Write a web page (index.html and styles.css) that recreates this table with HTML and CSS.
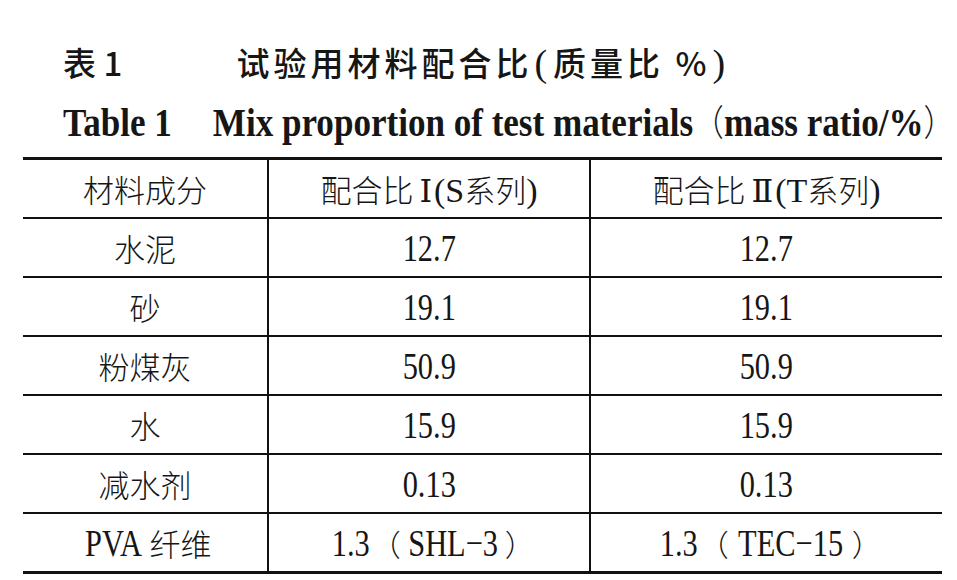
FILE: index.html
```html
<!DOCTYPE html>
<html lang="zh-CN">
<head>
    <meta charset="UTF-8">
    <meta name="viewport" content="width=device-width, initial-scale=1.0">
    <title>表1 试验用材料配合比</title>
    <link rel="stylesheet" href="styles.css">
</head>
<body>

<div class="caption">
    <div class="caption-cn">
        <span class="cn-no">表 1</span>
        <span class="cn-title">试验用材料配合比<span class="cn-paren">(</span>质量比 %<span class="cn-paren">)</span></span>
    </div>
    <div class="caption-en">
        <span class="en-inner"><span class="en-no">Table 1</span>Mix proportion of test materials<span class="paren">（</span>mass ratio/%<span class="paren">）</span></span>
    </div>
</div>

<table class="mix">
    <colgroup>
        <col class="col-name">
        <col class="col-s">
        <col class="col-t">
    </colgroup>
    <tr class="head">
        <td>材料成分</td>
        <td>配合比<span class="roman">Ⅰ</span><span class="lat">(S</span>系列<span class="lat">)</span></td>
        <td>配合比<span class="roman">Ⅱ</span><span class="lat">(T</span>系列<span class="lat">)</span></td>
    </tr>
    <tr>
        <td>水泥</td>
        <td><span class="num">12.7</span></td>
        <td><span class="num">12.7</span></td>
    </tr>
    <tr>
        <td>砂</td>
        <td><span class="num">19.1</span></td>
        <td><span class="num">19.1</span></td>
    </tr>
    <tr>
        <td>粉煤灰</td>
        <td><span class="num">50.9</span></td>
        <td><span class="num">50.9</span></td>
    </tr>
    <tr>
        <td>水</td>
        <td><span class="num">15.9</span></td>
        <td><span class="num">15.9</span></td>
    </tr>
    <tr>
        <td>减水剂</td>
        <td><span class="num">0.13</span></td>
        <td><span class="num">0.13</span></td>
    </tr>
    <tr>
        <td><span class="num">PVA</span>纤维</td>
        <td><span class="num">1.3</span><span class="fw">（</span><span class="num">SHL−3</span><span class="fw">）</span></td>
        <td><span class="num">1.3</span><span class="fw">（</span><span class="num">TEC−15</span><span class="fw">）</span></td>
    </tr>
</table>

</body>
</html>
```

FILE: styles.css
```css
body {
    margin: 0;
    padding: 0;
    background-color: #fff;
    color: #161616;
    font-family: "Liberation Serif", "Noto Sans CJK SC", serif;
}
.caption {
    padding-top: 33px;
    padding-left: 63px;
}
.caption-cn {
    height: 58px;
    line-height: 58px;
    font-family: "Noto Sans CJK SC", sans-serif;
    font-size: 33px;
    font-weight: 500;
    white-space: nowrap;
}
.cn-no {
    display: inline-block;
    width: 166px;
}
.cn-title {
    letter-spacing: 4px;
}
.cn-paren {
    font-family: "Liberation Serif", serif;
    font-weight: normal;
    font-size: 38px;
    margin: 0 2px;
}
.caption-en {
    height: 58px;
    line-height: 58px;
    white-space: nowrap;
    overflow: hidden;
}
.en-inner {
    display: inline-block;
    font-size: 41px;
    font-weight: bold;
    transform: scaleX(0.855);
    transform-origin: left center;
}
.en-no {
    margin-right: 48px;
}
.paren {
    font-family: "Noto Sans CJK SC", sans-serif;
    font-weight: 300;
    font-size: 36px;
}
.mix {
    border-collapse: collapse;
    margin-top: 8px;
    margin-left: 23px;
    width: 919px;
    border-top: 3px solid #111;
    border-bottom: 3px solid #111;
    table-layout: fixed;
}
.col-name {
    width: 245px;
}
.col-s {
    width: 322px;
}
.col-t {
    width: 352px;
}
.mix td {
    height: 57px;
    padding: 0;
    text-align: center;
    vertical-align: middle;
    border-top: 2px solid #111;
    border-left: 2px solid #111;
    font-family: "Noto Sans CJK SC", sans-serif;
    font-weight: 300;
    font-size: 31px;
    white-space: nowrap;
}
.mix td:first-child {
    border-left: none;
}
.mix .head td {
    border-top: none;
}
.num {
    display: inline-block;
    font-family: "Liberation Serif", serif;
    font-size: 38px;
    transform: scaleX(0.8);
}
.roman {
    font-family: "DejaVu Serif", "Liberation Serif", serif;
    font-size: 32px;
    margin: 0 2px 0 6px;
}
.lat {
    font-family: "Liberation Serif", serif;
    font-size: 34px;
}
.fw {
    font-size: 30px;
    margin: 0 -4px;
}
```
